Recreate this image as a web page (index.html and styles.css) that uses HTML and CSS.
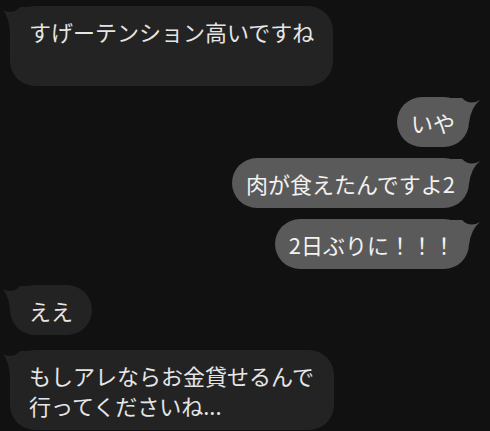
FILE: index.html
```html
<!DOCTYPE html>
<html>
<head>
    <meta charset="utf-8">
    <title>chat</title>
    <link rel="stylesheet" href="styles.css">
</head>
<body>
<div class="chat">
    <div class="msg left">
        <svg class="tail" viewBox="0 0 30 26"><path d="M0 4 Q10 9 17 1 L30 1 L30 26 L7 26 Q6 12 0 4 Z"/></svg>
        すげーテンション高いですね<br><br>
    </div>
    <div class="msg right">
        <svg class="tail" viewBox="0 0 30 26"><path d="M0 3 Q10 9 18 1 L30 1 L30 26 L11 26 Q9 10 0 3 Z"/></svg>
        いや
    </div>
    <div class="msg right">
        <svg class="tail" viewBox="0 0 30 26"><path d="M0 3 Q10 9 18 1 L30 1 L30 26 L11 26 Q9 10 0 3 Z"/></svg>
        肉が食えたんですよ2
    </div>
    <div class="msg right">
        <svg class="tail" viewBox="0 0 30 26"><path d="M0 3 Q10 9 18 1 L30 1 L30 26 L11 26 Q9 10 0 3 Z"/></svg>
        2日ぶりに！！！
    </div>
    <div class="msg left turn">
        <svg class="tail" viewBox="0 0 30 26"><path d="M0 4 Q10 9 17 1 L30 1 L30 26 L7 26 Q6 12 0 4 Z"/></svg>
        ええ
    </div>
    <div class="msg left wide">
        <svg class="tail" viewBox="0 0 30 26"><path d="M0 4 Q10 9 17 1 L30 1 L30 26 L7 26 Q6 12 0 4 Z"/></svg>
        もしアレならお金貸せるんで行ってくださいね...
    </div>
</div>
</body>
</html>
```

FILE: styles.css
```css
body, html {
    margin: 0;
    background: #111111;
    font-family: "Noto Sans CJK JP", "Noto Sans", sans-serif;
}

.chat {
    display: flex;
    flex-direction: column;
    gap: 11px;
    padding: 6px 21px 0 10px;
}

.msg {
    position: relative;
    z-index: 0;
    box-sizing: border-box;
    max-width: 324px;
    padding: 10px 19px;
    font-size: 22px;
    line-height: 30px;
    border-radius: 25px;
}

.left {
    align-self: flex-start;
    background: #232323;
    color: #e6e6e6;
}

.right {
    align-self: flex-end;
    background: #5a5a5a;
    color: #f2f2f2;
    padding: 10px 14px;
}

.turn {
    margin-top: 5px;
}

.wide {
    margin-top: 4px;
}

.tail {
    position: absolute;
    z-index: -1;
    top: 0;
    width: 30px;
    height: 26px;
}

.left .tail {
    left: -7px;
    fill: #232323;
}

.right .tail {
    right: -11px;
    fill: #5a5a5a;
    transform: scaleX(-1);
}
```
